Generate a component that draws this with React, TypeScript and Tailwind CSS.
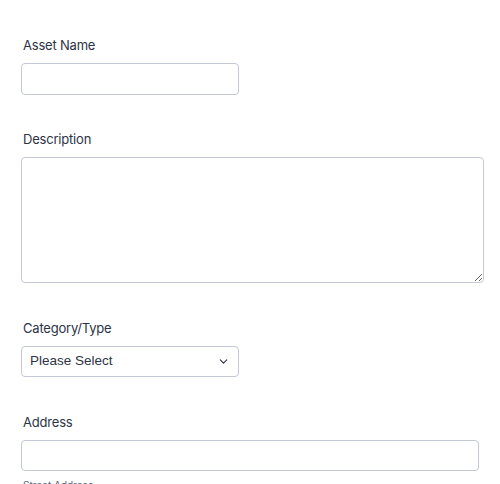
import React from 'react';
import { ChevronDown } from 'lucide-react';

const labelCls = 'block pl-[2px] text-[13px] leading-5 font-normal tracking-[-0.2px] text-[#2c3345]';
const boxCls = 'block rounded-[4px] border border-[#c5c9d6] bg-white';

const App: React.FC = () => {
  return (
    <div className="min-h-[484px] w-[500px] overflow-hidden bg-white pl-[21px] pt-[35px] font-[Inter,sans-serif]">
      <section>
        <label className={labelCls}>Asset Name</label>
        <input type="text" className={`${boxCls} mt-2 h-[32px] w-[218px]`} />
      </section>

      <section className="mt-[34px]">
        <label className={labelCls}>Description</label>
        <textarea className={`${boxCls} mt-2 h-[126px] w-[463px] resize`} />
      </section>

      <section className="mt-[35px]">
        <label className={labelCls}>Category/Type</label>
        <div className={`${boxCls} mt-2 flex h-[31px] w-[218px] items-center justify-between pl-2 pr-[8px]`}>
          <span className="font-['Liberation_Sans',Arial,sans-serif] text-[13.5px] text-[#2c3345]">Please Select</span>
          <ChevronDown className="h-[13px] w-[13px] text-[#2c3345]" strokeWidth={2} />
        </div>
      </section>

      <section className="mt-[35px]">
        <label className={labelCls}>Address</label>
        <input type="text" className={`${boxCls} mt-2 h-[31px] w-[458px]`} />
        <p className="mt-[6px] pl-[2px] text-[10px] leading-4 text-[#57647e]">Street Address</p>
      </section>
    </div>
  );
};

export default App;
